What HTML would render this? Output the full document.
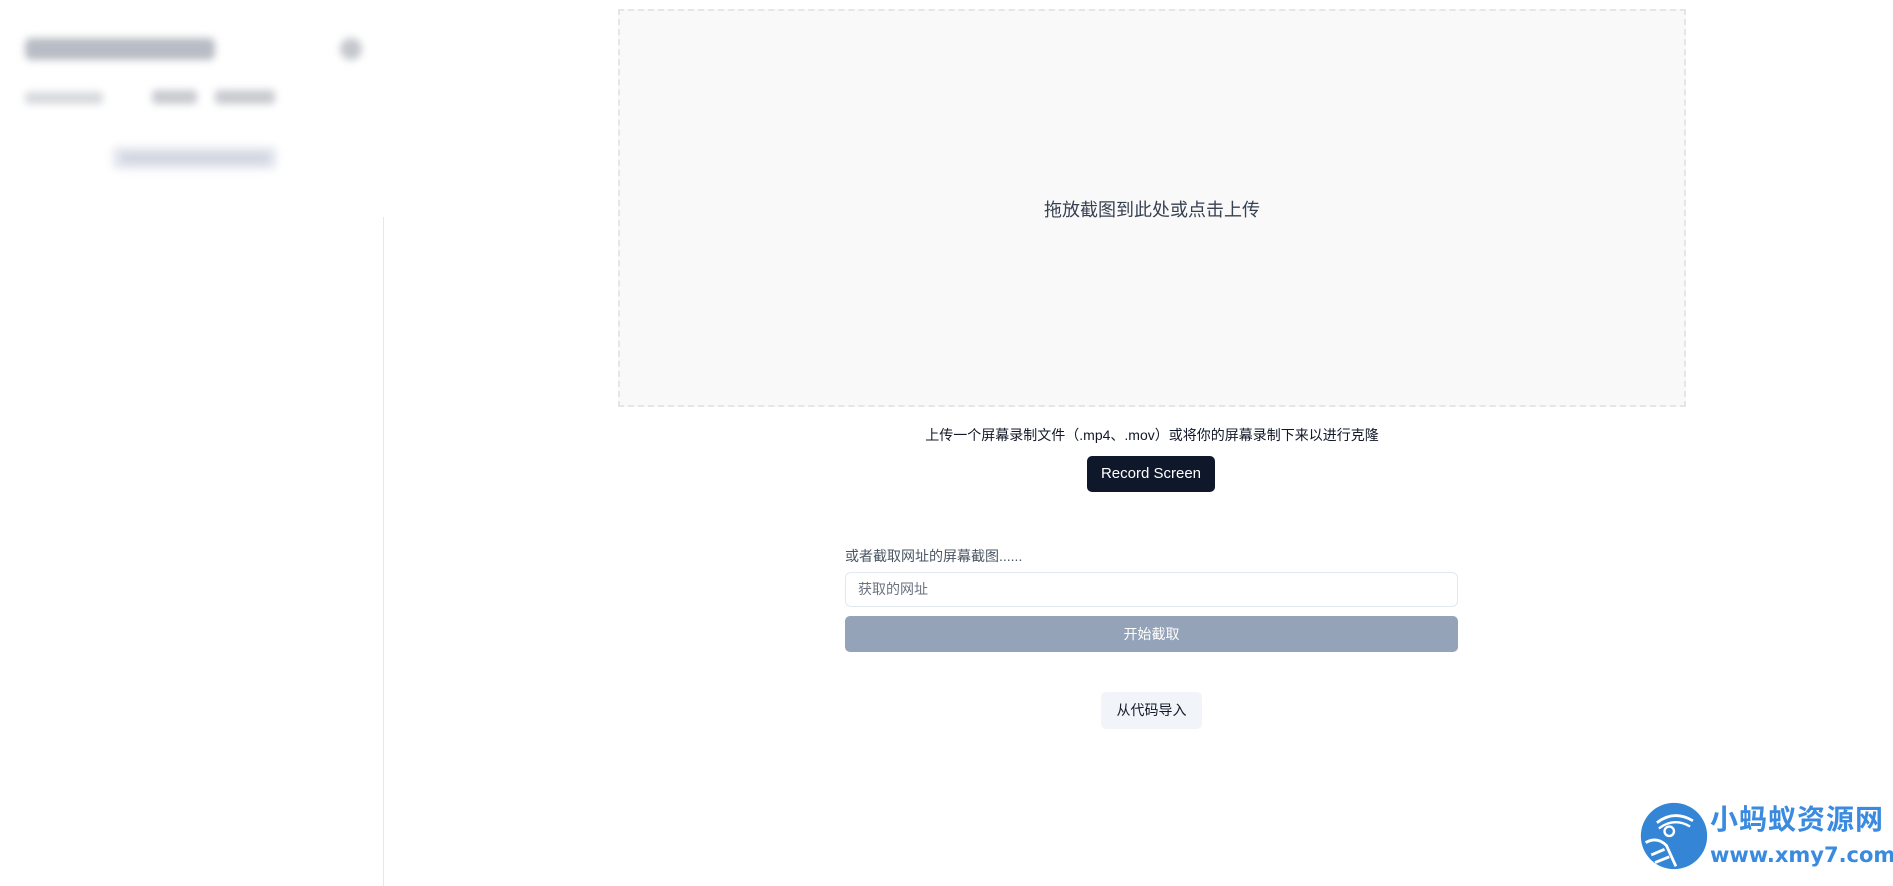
<!DOCTYPE html>
<html><head><meta charset="utf-8"><style>
*{box-sizing:border-box;margin:0;padding:0}
body{width:1893px;height:886px;background:#fff;position:relative;overflow:hidden;font-family:"Liberation Sans","Noto Sans CJK SC",sans-serif}
.a{position:absolute;white-space:nowrap}
.blur{filter:blur(4px)}
</style></head><body>
<div class="a blur" style="left:25px;top:38px;width:190px;height:22px;background:#b8bcc4;border-radius:6px"></div>
<div class="a blur" style="left:340px;top:38px;width:22px;height:22px;background:#c4c7cd;border-radius:50%"></div>
<div class="a blur" style="left:25px;top:92px;width:78px;height:12px;background:#d6d8dc;border-radius:4px"></div>
<div class="a blur" style="left:152px;top:90px;width:45px;height:14px;background:#c8cad0;border-radius:4px"></div>
<div class="a blur" style="left:215px;top:90px;width:60px;height:14px;background:#c8cad0;border-radius:4px"></div>
<div class="a blur" style="left:112px;top:146px;width:165px;height:24px;background:#e8ebf2;border-radius:6px"></div>
<div class="a blur" style="left:120px;top:153px;width:150px;height:10px;background:#d0d4de;border-radius:4px"></div>
<div class="a" style="left:383px;top:217px;width:1px;height:669px;background:#e5e7eb"></div>

<div class="a" style="left:618px;top:9px;width:1068px;height:398px;background:#f9f9f9;border:2px dashed #e6e6e6"></div>
<div class="a" style="left:618px;top:196px;width:1068px;text-align:center;font-size:18px;color:#374151">拖放截图到此处或点击上传</div>

<div class="a" style="left:618px;top:425px;width:1068px;text-align:center;font-size:14px;color:#111827">上传一个屏幕录制文件（.mp4、.mov）或将你的屏幕录制下来以进行克隆</div>
<div class="a" style="left:1087px;top:456px;width:128px;height:36px;background:#0f172a;border-radius:5px;color:#fff;font-size:15px;text-align:center;line-height:36px">Record Screen</div>

<div class="a" style="left:845px;top:546px;font-size:14px;color:#4b5563">或者截取网址的屏幕截图......</div>
<div class="a" style="left:845px;top:572px;width:613px;height:35px;border:1px solid #e2e8f0;border-radius:6px;font-size:14px;color:#6b7280;padding-left:12px;line-height:33px">获取的网址</div>
<div class="a" style="left:845px;top:616px;width:613px;height:36px;background:#94a3b8;border-radius:5px;color:#fff;font-size:14px;text-align:center;line-height:36px">开始截取</div>
<div class="a" style="left:1101px;top:692px;width:101px;height:37px;background:#f1f5f9;border-radius:5px;color:#111827;font-size:14px;text-align:center;line-height:37px">从代码导入</div>

<svg class="a" style="left:1638px;top:800px" width="72" height="72" viewBox="0 0 76 76">
<circle cx="38" cy="38" r="35" fill="#3585d6"/>
<path d="M20 24 Q38 10 58 22" stroke="#fff" stroke-width="3" fill="none"/>
<path d="M22 30 Q38 18 55 28" stroke="#fff" stroke-width="2.5" fill="none"/>
<circle cx="33" cy="33" r="5" fill="none" stroke="#fff" stroke-width="2.5"/>
<path d="M8 45 Q20 38 30 48 L40 70 M14 58 L28 52 M18 66 L33 60" stroke="#fff" stroke-width="3" fill="none"/>
</svg>
<div class="a" style="left:1710px;top:802px;font-size:28px;font-weight:bold;color:#3a8be0;letter-spacing:1px;line-height:36px">小蚂蚁资源网</div>
<div class="a" style="left:1710px;top:842px;font-size:21px;font-weight:bold;color:#3a8be0;line-height:26px;font-family:'DejaVu Sans',sans-serif">www.xmy7.com</div>
</body></html>
